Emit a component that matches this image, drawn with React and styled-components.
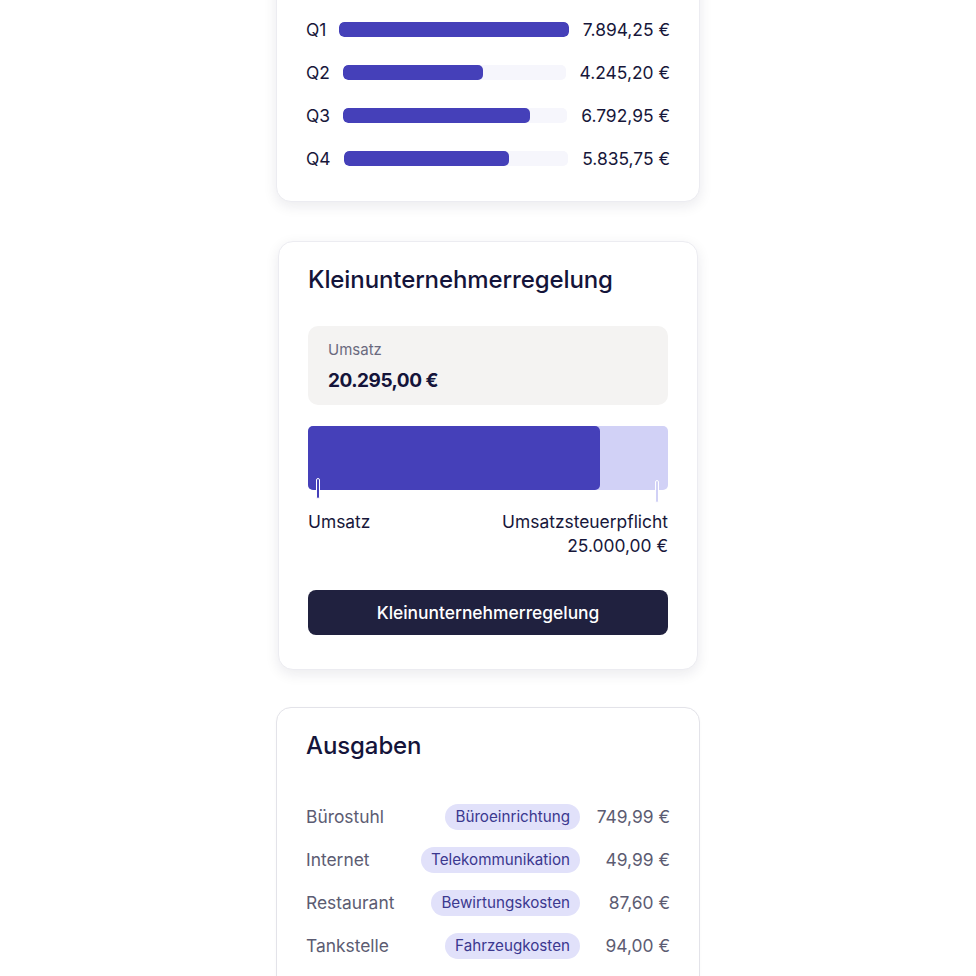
import React from 'react';
import styled, { createGlobalStyle } from 'styled-components';

const GlobalStyle = createGlobalStyle`
  html, body {
    margin: 0;
    padding: 0;
    background: #ffffff;
    font-family: Inter, "Noto Sans", "Liberation Sans", sans-serif;
    color: #17173a;
    overflow: hidden;
  }
`;

const Page = styled.div`
  display: flex;
  flex-direction: column;
  align-items: center;
  margin-top: -40px;
`;

const Card = styled.div`
  box-sizing: border-box;
  width: ${p => p.$width || 424}px;
  margin-top: ${p => p.$mt || 0}px;
  background: #fff;
  border-radius: 15px;
  border: 1px solid ${p => (p.$flat ? '#e3e3e9' : '#ececf1')};
  box-shadow: ${p => (p.$flat ? '0 1px 3px rgba(20,20,50,0.03)' : '0 4px 14px rgba(20,20,50,0.09)')};
  padding: ${p => p.$pad || '23px 29px 34px'};
`;

const Title = styled.h2`
  margin: 0;
  font-size: 24px;
  line-height: 30px;
  font-weight: 450;
  letter-spacing: -0.1px;
  color: #14143a;
`;

const QuarterList = styled.div`
  display: flex;
  flex-direction: column;
`;

const QuarterRow = styled.div`
  display: flex;
  align-items: center;
  height: 43px;
  gap: 13px;
  font-size: 17.4px;
`;

const QLabel = styled.span`
  color: #17173a;
`;

const Track = styled.div`
  flex: 1;
  height: 15px;
  border-radius: 5px;
  background: #f6f6fc;
  overflow: hidden;
`;

const Fill = styled.div`
  height: 100%;
  border-radius: 5px;
  background: #4540b9;
`;

const QValue = styled.span`
  margin-left: 1px;
  color: #17173a;
`;

const InfoBox = styled.div`
  margin-top: 31px;
  background: #f4f3f2;
  border-radius: 10px;
  padding: 14px 20px 10px;
  display: flex;
  flex-direction: column;
  gap: 7px;
`;

const InfoLabel = styled.span`
  font-size: 15px;
  line-height: 20px;
  color: #6a6a7e;
`;

const InfoValue = styled.span`
  font-size: 19px;
  line-height: 28px;
  font-weight: 700;
  letter-spacing: -0.5px;
  color: #14143a;
`;

const Meter = styled.div`
  position: relative;
  margin-top: 21px;
  height: 64px;
  border-radius: 5px;
  background: #d1d1f6;
`;

const MeterFill = styled.div`
  height: 100%;
  border-radius: 5px;
  background: #4540b9;
`;

const Tick = styled.div`
  position: absolute;
  width: 2px;
  border: 1px solid #fff;
  border-radius: 2px;
  background: ${p => p.$color};
  ${p => (p.$right ? `right: ${p.$right}px;` : `left: ${p.$left}px;`)}
  top: ${p => p.$top}px;
  height: ${p => p.$h}px;
`;

const Scale = styled.div`
  display: flex;
  justify-content: space-between;
  margin-top: 20px;
  font-size: 17.4px;
  line-height: 24px;
  color: #17173a;
`;

const ScaleEnd = styled.div`
  text-align: right;
`;

const Button = styled.button`
  display: block;
  width: 100%;
  margin-top: 32px;
  height: 45px;
  border: none;
  border-radius: 8px;
  background: #20213f;
  color: #fff;
  font-family: inherit;
  font-size: 17.4px;
  font-weight: 500;
`;

const ExpenseList = styled.div`
  margin-top: 34px;
  display: flex;
  flex-direction: column;
`;

const ExpenseRow = styled.div`
  display: flex;
  align-items: center;
  height: 43px;
  font-size: 17.4px;
`;

const ExpenseName = styled.span`
  flex: 1;
  color: #5c5c72;
`;

const Chip = styled.span`
  background: #e1e1fa;
  color: #3b388f;
  font-size: 15.2px;
  line-height: 26px;
  padding: 0 10px;
  border-radius: 13px;
`;

const Amount = styled.span`
  width: 90px;
  text-align: right;
  color: #5c5c72;
`;

const quarters = [
  { q: 'Q1', v: '7.894,25 €', pct: 100 },
  { q: 'Q2', v: '4.245,20 €', pct: 63 },
  { q: 'Q3', v: '6.792,95 €', pct: 83.5 },
  { q: 'Q4', v: '5.835,75 €', pct: 73.5 },
];

const expenses = [
  { name: 'Bürostuhl', cat: 'Büroeinrichtung', amount: '749,99 €' },
  { name: 'Internet', cat: 'Telekommunikation', amount: '49,99 €' },
  { name: 'Restaurant', cat: 'Bewirtungskosten', amount: '87,60 €' },
  { name: 'Tankstelle', cat: 'Fahrzeugkosten', amount: '94,00 €' },
];

export default function App() {
  const umsatz = 20295;
  const limit = 25000;
  return (
    <>
      <GlobalStyle />
      <Page>
        <Card $pad="47px 29px 21px">
          <QuarterList>
            {quarters.map(r => (
              <QuarterRow key={r.q}>
                <QLabel>{r.q}</QLabel>
                <Track>
                  <Fill style={{ width: `${r.pct}%` }} />
                </Track>
                <QValue>{r.v}</QValue>
              </QuarterRow>
            ))}
          </QuarterList>
        </Card>

        <Card $width={420} $mt={39}>
          <Title>Kleinunternehmerregelung</Title>
          <InfoBox>
            <InfoLabel>Umsatz</InfoLabel>
            <InfoValue>20.295,00 €</InfoValue>
          </InfoBox>
          <Meter>
            <MeterFill style={{ width: `${(umsatz / limit) * 100}%` }} />
            <Tick $left={8} $top={52} $h={19} $color="#4540b9" />
            <Tick $right={9} $top={54} $h={21} $color="#d1d1f6" />
          </Meter>
          <Scale>
            <span>Umsatz</span>
            <ScaleEnd>
              Umsatzsteuerpflicht
              <br />
              25.000,00 €
            </ScaleEnd>
          </Scale>
          <Button>Kleinunternehmerregelung</Button>
        </Card>

        <Card $flat $mt={37}>
          <Title>Ausgaben</Title>
          <ExpenseList>
            {expenses.map(e => (
              <ExpenseRow key={e.name}>
                <ExpenseName>{e.name}</ExpenseName>
                <Chip>{e.cat}</Chip>
                <Amount>{e.amount}</Amount>
              </ExpenseRow>
            ))}
          </ExpenseList>
        </Card>
      </Page>
    </>
  );
}
